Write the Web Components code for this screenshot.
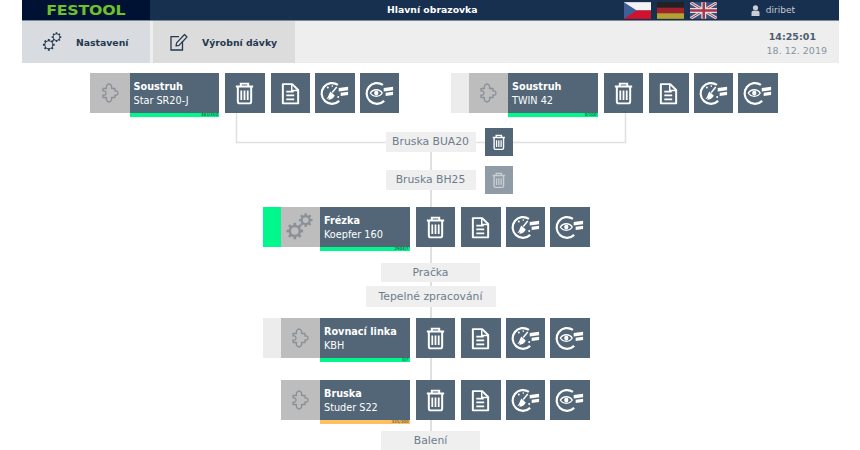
<!DOCTYPE html>
<html lang="cs">
<head>
<meta charset="utf-8">
<title>Hlavní obrazovka</title>
<style>
  html, body { margin: 0; height: 100%; background: #fff; overflow: hidden; }
  body { font-family: "DejaVu Sans", Verdana, sans-serif; }
</style>
</head>
<body>
<app-screen>
  <app-header slot="header"></app-header>
  <app-toolbar slot="toolbar">
    <tool-tab icon="gearsThin" size="28" label="Nastavení" style="width:128px;--tab-bg:#d8dce0;--tab-pad:17px;--tab-gap:9px"></tool-tab>
    <tool-tab icon="edit" size="18" label="Výrobní dávky" style="width:142px;--tab-bg:#dcdcdc;--tab-pad:17px;--tab-gap:14px"></tool-tab>
  </app-toolbar>

  <flow-lines></flow-lines>

  <div class="top">
    <machine-row style="margin-left:50.500px" strip="none" type="puzzle" title="Soustruh" model="Star SR20-J" count="483/450" bar="#00f78c"></machine-row>
    <machine-row style="margin-left:52px" strip="light" type="puzzle" title="Soustruh" model="TWIN 42" count="0/100" bar="#00f78c"></machine-row>
  </div>

  <step-label text="Bruska BUA20" width="90" trash="on" style="margin-top:11px"></step-label>
  <step-label text="Bruska BH25" width="90" trash="off" style="margin-top:10px"></step-label>

  <machine-row class="mid" strip="green" type="gears" title="Frézka" model="Koepfer 160" count="2904/?" bar="#00f78c" style="margin-top:13px"></machine-row>

  <step-label text="Pračka" width="99" height="19" style="margin-top:12px"></step-label>
  <step-label text="Tepelné zpracování" width="130" height="21" style="margin-top:4px"></step-label>

  <machine-row class="mid" strip="light" type="puzzle" title="Rovnací linka" model="KBH" count="0/?" bar="#00f78c" style="margin-top:11px"></machine-row>
  <machine-row class="mid" strip="none" type="puzzle" title="Bruska" model="Studer S22" count="335/300" bar="#fdbf5f" style="margin-top:18px"></machine-row>

  <step-label text="Balení" width="99" height="19" style="margin-top:7px"></step-label>
</app-screen>

<script>
// ozubene kolo jako jedna cesta, diru vyresi evenodd
function gear(cx, cy, r, hole, teeth) {
  const inner = r * 0.74;
  const step = Math.PI * 2 / teeth;
  let d = "";
  for (let i = 0; i < teeth; i++) {
    const a = i * step;
    const pts = [[inner, a - step * 0.3], [r, a - step * 0.2], [r, a + step * 0.2], [inner, a + step * 0.3]];
    pts.forEach(([rad, ang], j) => {
      d += (i === 0 && j === 0 ? "M" : "L") + (cx + rad * Math.cos(ang)).toFixed(2) + " " + (cy + rad * Math.sin(ang)).toFixed(2);
    });
  }
  d += `ZM${cx - hole} ${cy}a${hole} ${hole} 0 1 0 ${hole * 2} 0a${hole} ${hole} 0 1 0 ${-hole * 2} 0Z`;
  return `<path d="${d}" fill="currentColor" fill-rule="evenodd"/>`;
}

const RING = `<path d="M23.200 11.800A10.500 10.500 0 1 0 24.500 28" fill="none" stroke="currentColor" stroke-width="2.200"/>`;
const FLAGS = `<path d="M24 15l9.500-1.300v3.600L24 18.600zM26 19.800l7.500-1v3.200l-7.500 1z" fill="currentColor"/>`;

const ICONS = {
  gears: [40, gear(14, 24, 8.500, 3.800, 8) + gear(25, 13, 7, 3, 8)],
  gearsThin: [40, gear(14, 24, 8.500, 5, 8) + gear(25, 13, 7, 4, 8)],
  edit: [18, `<path d="M9 3.700H1V17h11.500V8" fill="none" stroke="currentColor" stroke-width="1.300"/>
      <path d="M6 13l.6-3.100L14.500 1.500 17 4l-8 8.300z" fill="none" stroke="currentColor" stroke-width="1.200" stroke-linejoin="round"/>`],
  puzzle: [24, `<path d="M5 7.500H8.500C7.500 5 9.500 3 11 3C12.500 3 14.500 5 13.500 7.500H17V10C19 9.500 20 10.800 20 12C20 13.200 19 14.500 17 14V16.500H13.500C14.500 19 12.500 21 11 21C9.500 21 7.500 19 8.500 16.500H5V14C7 14.700 8 13.200 8 12C8 10.800 7 9.300 5 10Z" fill="none" stroke="currentColor" stroke-width="1.300" stroke-linejoin="round"/>`],
  trash: [40, `<g fill="none" stroke="currentColor" stroke-width="2"><path d="M11 13.500h17.500M16 13.500v-3h7.500v3"/><path d="M13 14v14.500c0 1.200.8 2 2 2h9.500c1.200 0 2-.8 2-2V14"/></g>
      <path d="M16.500 17.500v9.500M19.750 17.500v9.500M23 17.500v9.500" stroke="currentColor" stroke-width="1.800"/>`],
  doc: [40, `<g fill="none" stroke="currentColor" stroke-width="2" stroke-linejoin="round"><path d="M12 11h9.500l6 6v13.500H12z"/><path d="M21 11v6.500h6.500" stroke-width="1.500"/></g>
      <path d="M15.500 18.500h7.500M15.500 22.500h8M15.500 26.500h8" stroke="currentColor" stroke-width="1.800"/>`],
  clean: [40, RING + FLAGS + `<path d="M22 14l-4.500 5.500" stroke="currentColor" stroke-width="1.500"/>
      <path d="M15.500 18.500l4.500 4c-1 2.700-3.700 4.500-7 4.500 1-.8 1.300-1.600 1.300-2-.7.500-1.500.9-2.800 1 1.500-1.500 2.300-3.300 2.500-4.500.5-1.100 1-2 1.500-3z" fill="currentColor"/>
      <circle cx="13" cy="14.500" r="1" fill="currentColor"/><circle cx="23.500" cy="24" r="1" fill="currentColor"/><circle cx="17.500" cy="13" r=".8" fill="currentColor"/>`],
  view: [40, RING + FLAGS + `<path d="M10.500 20c2.600-4.400 9.400-4.400 12 0-2.600 4.400-9.400 4.400-12 0z" fill="none" stroke="currentColor" stroke-width="1.400"/>
      <circle cx="16.500" cy="20" r="2.200" fill="currentColor"/>`]
};
const svgIcon = (name, size) => {
  const [box, body] = ICONS[name];
  return `<svg width="${size}" height="${size}" viewBox="0 0 ${box} ${box}" aria-hidden="true">${body}</svg>`;
};

class AppScreen extends HTMLElement {
  constructor() {
    super();
    this.attachShadow({mode: "open"}).innerHTML = `
      <style>
        :host { display: block; width: 817px; height: 450px; margin-left: 22px; }
        main { position: relative; isolation: isolate; display: flex; flex-direction: column; }
        ::slotted(.top) { display: flex; margin-top: 10px; }
      </style>
      <slot name="header"></slot>
      <slot name="toolbar"></slot>
      <main><slot></slot></main>`;
  }
}

class AppHeader extends HTMLElement {
  constructor() {
    super();
    this.attachShadow({mode: "open"}).innerHTML = `
      <style>
        :host { display: grid; grid-template-columns: 128px 1fr auto; height: 20px; background: #18304f; border-bottom: 1px solid #7c8894; color: #fff; }
        .logo { background: #001233; color: #6ec02c; font: bold 13.500px "DejaVu Sans", sans-serif; letter-spacing: -.2px; display: flex; align-items: center; justify-content: center; }
        .logo span { display: inline-block; transform: scaleX(1.17); }
        h1 { margin: 0; font: bold 9.300px "DejaVu Sans", sans-serif; padding-left: 237px; line-height: 20px; }
        .right { display: flex; align-items: center; gap: 5.500px; padding-right: 44px; }
        svg.flag { display: block; }
        .user { display: flex; align-items: center; gap: 6px; margin-left: 28px; color: #c4cbd3; font-size: 9px; }
      </style>
      <div class="logo"><span>FESTOOL</span></div>
      <h1>Hlavní obrazovka</h1>
      <div class="right">
        <svg class="flag" width="27.500" height="17" viewBox="0 0 28 17"><rect width="28" height="8.500" fill="#f4f4f4"/><rect y="8.500" width="28" height="8.500" fill="#d2112e"/><path d="M0 0l13 8.500L0 17z" fill="#3f5f97"/></svg>
        <svg class="flag" width="27.500" height="17" viewBox="0 0 28 17"><rect width="28" height="5.700" fill="#222"/><rect y="5.700" width="28" height="5.700" fill="#a5202c"/><rect y="11.300" width="28" height="5.700" fill="#b3a230"/></svg>
        <svg class="flag" width="27.500" height="17" viewBox="0 0 28 17"><rect width="28" height="17" fill="#3c4f7d"/><path d="M0 0l28 17M28 0L0 17" stroke="#ddd" stroke-width="3"/><path d="M0 0l28 17M28 0L0 17" stroke="#a9344d" stroke-width="1"/><path d="M14 0v17M0 8.500h28" stroke="#ddd" stroke-width="5"/><path d="M14 0v17M0 8.500h28" stroke="#a9344d" stroke-width="2.500"/></svg>
        <div class="user">
          <svg width="9" height="11" viewBox="0 0 9 11"><circle cx="4.500" cy="2.800" r="2.600" fill="#c9ced4"/><path d="M.5 11V7.500C.5 6.300 1.500 5.800 2.500 5.800h4c1 0 2 .5 2 1.700V11z" fill="#c9ced4"/></svg>
          <span>diribet</span>
        </div>
      </div>`;
  }
}

class AppToolbar extends HTMLElement {
  constructor() {
    super();
    this.attachShadow({mode: "open"}).innerHTML = `
      <style>
        :host { display: flex; height: 42px; background: #eeeeee; gap: 3px; align-items: stretch; }
        .clock { margin-left: auto; padding: 9px 12px 0 0; text-align: right; color: #8b949c; font-size: 9.500px; line-height: 14px; }
        b { display: block; color: #4c5d6c; padding-right: 11px; }
      </style>
      <slot></slot>
      <div class="clock"><b>14:25:01</b>18. 12. 2019</div>`;
  }
}

class ToolTab extends HTMLElement {
  constructor() {
    super();
    this.attachShadow({mode: "open"}).innerHTML = `
      <style>
        :host { display: flex; align-items: center; background: var(--tab-bg); padding-left: var(--tab-pad); gap: var(--tab-gap); color: #24384f; font-size: 9.300px; font-weight: bold; box-sizing: border-box; }
        svg { display: block; flex: none; }
      </style>
      ${svgIcon(this.getAttribute("icon"), this.getAttribute("size"))}
      <span>${this.getAttribute("label")}</span>`;
  }
}

class ActionButton extends HTMLElement {
  constructor() {
    super();
    this.attachShadow({mode: "open"}).innerHTML = `
      <style>
        :host { display: flex; align-items: center; justify-content: center; width: var(--btn-w, 39.500px); height: var(--btn-h, 40px); background: var(--btn-bg, #526677); color: var(--btn-fg, #fff); flex: none; }
        svg { display: block; }
      </style>
      ${svgIcon(this.getAttribute("icon"), this.getAttribute("size") || 40)}`;
  }
}

class MachineRow extends HTMLElement {
  constructor() {
    super();
    const strip = this.getAttribute("strip");
    const stripBg = {none: "transparent", light: "#ececec", green: "#00f78c"}[strip];
    const type = this.getAttribute("type");
    this.attachShadow({mode: "open"}).innerHTML = `
      <style>
        :host { display: grid; grid-template-columns: 17.500px 39.500px 89.500px auto; grid-template-rows: 40px 4px; width: max-content; }
        :host(.mid) { margin-left: 241px; }
        .strip { background: ${stripBg}; }
        .type { background: #bdbdbd; color: #8a9097; display: flex; align-items: center; justify-content: center; }
        .type svg { display: block; }
        .info { background: #526677; color: #fff; padding: 7px 4px 0; font-size: 9.700px; line-height: 14px; white-space: nowrap; }
        .info b { display: block; }
        .bar { grid-column: 3; background: ${this.getAttribute("bar")}; color: #1b3a2a; font-size: 4.100px; line-height: 4px; text-align: right; padding-right: 1px; overflow: hidden; }
        .actions { grid-column: 4; grid-row: 1; display: flex; gap: 5px; margin-left: 6px; }
        action-button:first-child { margin-right: 1px; }
      </style>
      <div class="strip"></div>
      <div class="type">${svgIcon(type, type === "gears" ? 40 : 24)}</div>
      <div class="info"><b>${this.getAttribute("title")}</b>${this.getAttribute("model")}</div>
      <div class="actions">
        <action-button icon="trash"></action-button>
        <action-button icon="doc"></action-button>
        <action-button icon="clean"></action-button>
        <action-button icon="view"></action-button>
      </div>
      <div class="bar">${this.getAttribute("count")}</div>`;
  }
}

class StepLabel extends HTMLElement {
  constructor() {
    super();
    const trash = this.getAttribute("trash");
    const w = this.getAttribute("width");
    const h = this.getAttribute("height") || 20;
    this.attachShadow({mode: "open"}).innerHTML = `
      <style>
        :host { display: grid; grid-template-columns: 1fr ${w}px 1fr; column-gap: 9px; align-items: center; ${trash ? "height:28px;" : ""} }
        .text { grid-column: 2; height: ${h}px; line-height: ${h}px; background: #efefef; color: #6d7c8b; font-size: 10.800px; text-align: center; white-space: nowrap; }
        action-button { --btn-w: 28px; --btn-h: 28px; }
        action-button.off { --btn-bg: #8f9ba6; --btn-fg: #c8ced3; }
      </style>
      <div class="text">${this.getAttribute("text")}</div>
      ${trash ? `<div><action-button icon="trash" size="28" class="${trash === "off" ? "off" : ""}"></action-button></div>` : ""}`;
  }
}

// spojovaci cary lezi pod kartami, main zacina na y=63
class FlowLines extends HTMLElement {
  constructor() {
    super();
    this.attachShadow({mode: "open"}).innerHTML = `
      <style>
        :host { position: absolute; left: 0; top: 0; width: 817px; height: 387px; z-index: -1; }
        svg { display: block; }
      </style>
      <svg width="817" height="387" fill="none" stroke="#e0e0e0">
        <path d="M214.500 50v29.500h389V50" stroke-width="1.500"/>
        <path d="M409 79v308" stroke-width="2"/>
      </svg>`;
  }
}

customElements.define("action-button", ActionButton);
customElements.define("app-screen", AppScreen);
customElements.define("app-header", AppHeader);
customElements.define("app-toolbar", AppToolbar);
customElements.define("tool-tab", ToolTab);
customElements.define("machine-row", MachineRow);
customElements.define("step-label", StepLabel);
customElements.define("flow-lines", FlowLines);
</script>
</body>
</html>
